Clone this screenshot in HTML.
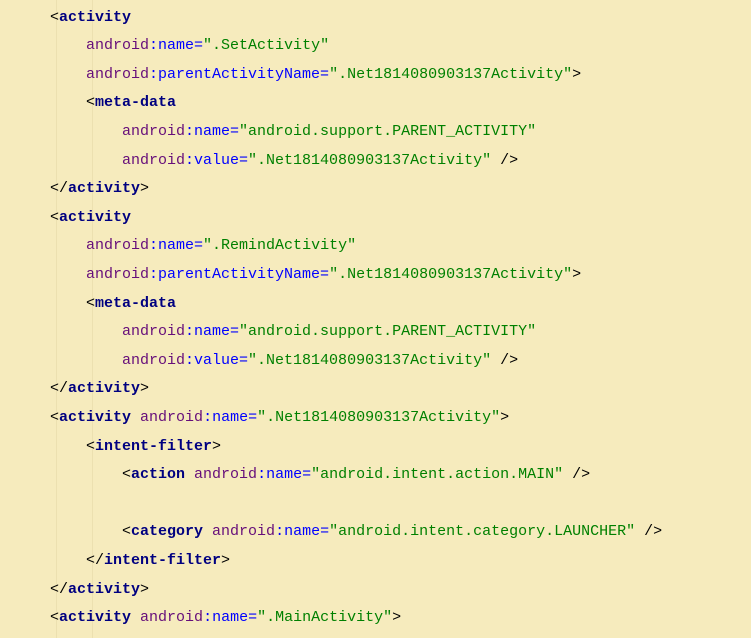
<!DOCTYPE html>
<html><head><meta charset="utf-8"><style>
html,body{margin:0;padding:0}
body{width:751px;height:638px;overflow:hidden;background:#f6ebbd;position:relative;font-family:"Liberation Mono",monospace;font-size:15px}
.g{position:absolute;top:0;bottom:0;width:1px;background:#ece0b0}
pre{margin:0;position:absolute;left:50px;top:3.7px;font:inherit;line-height:28.6px;color:#000}
.t{color:#000080;font-weight:bold}
.a{color:#660e7a}
.e{color:#0000ff}
.v{color:#008000}
</style></head><body>
<div class="g" style="left:56px"></div><div class="g" style="left:92px"></div>
<pre>&lt;<span class="t">activity</span>
    <span class="a">android</span><span class="e">:name=</span><span class="v">".SetActivity"</span>
    <span class="a">android</span><span class="e">:parentActivityName=</span><span class="v">".Net1814080903137Activity"</span>&gt;
    &lt;<span class="t">meta-data</span>
        <span class="a">android</span><span class="e">:name=</span><span class="v">"android.support.PARENT_ACTIVITY"</span>
        <span class="a">android</span><span class="e">:value=</span><span class="v">".Net1814080903137Activity"</span> /&gt;
&lt;/<span class="t">activity</span>&gt;
&lt;<span class="t">activity</span>
    <span class="a">android</span><span class="e">:name=</span><span class="v">".RemindActivity"</span>
    <span class="a">android</span><span class="e">:parentActivityName=</span><span class="v">".Net1814080903137Activity"</span>&gt;
    &lt;<span class="t">meta-data</span>
        <span class="a">android</span><span class="e">:name=</span><span class="v">"android.support.PARENT_ACTIVITY"</span>
        <span class="a">android</span><span class="e">:value=</span><span class="v">".Net1814080903137Activity"</span> /&gt;
&lt;/<span class="t">activity</span>&gt;
&lt;<span class="t">activity</span> <span class="a">android</span><span class="e">:name=</span><span class="v">".Net1814080903137Activity"</span>&gt;
    &lt;<span class="t">intent-filter</span>&gt;
        &lt;<span class="t">action</span> <span class="a">android</span><span class="e">:name=</span><span class="v">"android.intent.action.MAIN"</span> /&gt;

        &lt;<span class="t">category</span> <span class="a">android</span><span class="e">:name=</span><span class="v">"android.intent.category.LAUNCHER"</span> /&gt;
    &lt;/<span class="t">intent-filter</span>&gt;
&lt;/<span class="t">activity</span>&gt;
&lt;<span class="t">activity</span> <span class="a">android</span><span class="e">:name=</span><span class="v">".MainActivity"</span>&gt;</pre>
</body></html>
